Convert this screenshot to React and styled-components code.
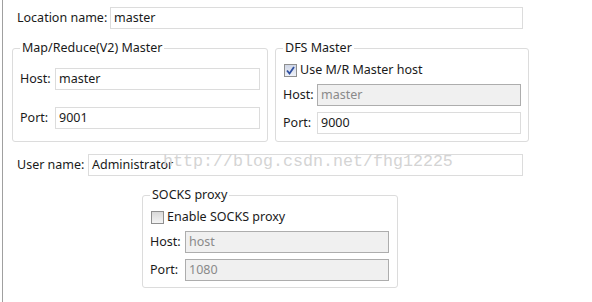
import React from "react";
import styled, { createGlobalStyle } from "styled-components";

const Global = createGlobalStyle`
  html, body { margin: 0; padding: 0; background: #fff; }
  body { font-family: "Noto Sans", "Open Sans", sans-serif; font-size: 12.5px; color: #1a1a1a; }
`;

const Page = styled.div`
  position: relative;
  width: 592px;
  height: 302px;
  box-sizing: border-box;
  margin-left: 2px;
  border-left: 1px solid #a0a0a0;
  padding: 7px 0 0 9px;
  display: flex;
  flex-direction: column;
  align-items: flex-start;
`;

const FieldRow = styled.div`
  display: grid;
  grid-template-columns: ${(p) => p.$label}px 1fr;
  align-items: center;
  width: ${(p) => p.$width}px;
  margin-left: ${(p) => p.$indent || 0}px;
  margin-top: ${(p) => p.$top || 0}px;
`;

const Label = styled.span`
  white-space: nowrap;
  line-height: 16px;
`;

const Input = styled.div`
  box-sizing: border-box;
  height: 22px;
  border: 1px solid ${(p) => (p.$disabled ? "#adadad" : "#dcdcdc")};
  background: ${(p) => (p.$disabled ? "#f0f0f0" : "#fff")};
  color: ${(p) => (p.$disabled ? "#8a8a8a" : "#1a1a1a")};
  padding: 0 3px;
  display: flex;
  align-items: center;
  line-height: 16px;
`;

const GroupRow = styled.div`
  display: flex;
  gap: 7px;
  margin-top: 11px;
  width: 516px;
`;

const Group = styled.fieldset`
  box-sizing: border-box;
  width: ${(p) => p.$width}px;
  margin: 0;
  margin-left: ${(p) => p.$indent || 0}px;
  margin-top: ${(p) => p.$top || 0}px;
  padding: ${(p) => p.$pt || 0}px ${(p) => p.$right || 7}px ${(p) => p.$bottom}px 7px;
  border: 1px solid #dcdcdc;
  border-radius: 3px;
  display: flex;
  flex-direction: column;
  gap: ${(p) => p.$gap}px;
`;

const Legend = styled.legend`
  padding: 0 2px;
  margin-left: 0;
  line-height: 16px;
  font-size: 12.5px;
`;

const CheckRow = styled.label`
  display: flex;
  align-items: center;
  gap: 3px;
  height: 16px;
  line-height: 16px;
  margin-left: 1px;
`;

const Box = styled.span`
  box-sizing: border-box;
  width: 13px;
  height: 13px;
  border: 1px solid #8f8f8f;
  background: ${(p) => (p.$checked ? "linear-gradient(#cfd6e6, #eef1f8)" : "linear-gradient(#d8d8d8, #f4f4f4)")};
  display: inline-flex;
  align-items: center;
  justify-content: center;
`;

const Watermark = styled.div`
  position: absolute;
  left: 160px;
  top: 152px;
  font-family: "Liberation Mono", "DejaVu Sans Mono", monospace;
  font-size: 16.67px;
  color: #d4d4d4;
  white-space: nowrap;
  pointer-events: none;
`;

function Checkbox({ checked, children }) {
  return (
    <CheckRow>
      <Box $checked={checked}>
        {checked && (
          <svg width="9" height="9" viewBox="0 0 9 9">
            <path d="M1 4.5 L3.5 7.5 L8 1" fill="none" stroke="#2f4fa0" strokeWidth="1.8" />
          </svg>
        )}
      </Box>
      <span>{children}</span>
    </CheckRow>
  );
}

export default function App() {
  return (
    <>
      <Global />
      <Page>
        <FieldRow $label={93} $width={506} $indent={5}>
          <Label>Location name:</Label>
          <Input>master</Input>
        </FieldRow>

        <GroupRow>
          <Group $width={256} $gap={17} $bottom={12} $pt={12}>
            <Legend>Map/Reduce(V2) Master</Legend>
            <FieldRow $label={35} $width={240}>
              <Label>Host:</Label>
              <Input>master</Input>
            </FieldRow>
            <FieldRow $label={35} $width={240}>
              <Label>Port:</Label>
              <Input>9001</Input>
            </FieldRow>
          </Group>
          <Group $width={255} $gap={6} $bottom={5} $pt={6}>
            <Legend>DFS Master</Legend>
            <Checkbox checked>Use M/R Master host</Checkbox>
            <FieldRow $label={34} $width={238}>
              <Label>Host:</Label>
              <Input $disabled>master</Input>
            </FieldRow>
            <FieldRow $label={34} $width={238}>
              <Label>Port:</Label>
              <Input>9000</Input>
            </FieldRow>
          </Group>
        </GroupRow>

        <FieldRow $label={71} $width={506} $indent={5} $top={12}>
          <Label>User name:</Label>
          <Input>Administrator</Input>
        </FieldRow>

        <Group $width={256} $indent={130} $top={11} $gap={6} $bottom={6} $right={8} $pt={6}>
          <Legend>SOCKS proxy</Legend>
          <Checkbox>Enable SOCKS proxy</Checkbox>
          <FieldRow $label={35} $width={239}>
            <Label>Host:</Label>
            <Input $disabled>host</Input>
          </FieldRow>
          <FieldRow $label={35} $width={239}>
            <Label>Port:</Label>
            <Input $disabled>1080</Input>
          </FieldRow>
        </Group>

        <Watermark>http://blog.csdn.net/fhg12225</Watermark>
      </Page>
    </>
  );
}
